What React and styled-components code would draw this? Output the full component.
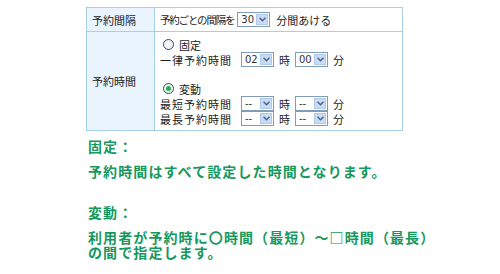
import styled, { createGlobalStyle } from "styled-components";

const Global = createGlobalStyle`
  body {
    margin: 0;
    background: #fff;
    font-family: "Noto Sans CJK JP", "Noto Sans", sans-serif;
  }
`;

const Page = styled.div`
  width: 500px;
  height: 274px;
  padding: 7px 0 0 86px;
  box-sizing: border-box;
`;

const Table = styled.table`
  width: 317px;
  border-collapse: collapse;
  font-size: 11px;
  color: #222;
  line-height: 14px;
`;

const Label = styled.td`
  width: 62px;
  background: #eaf4fe;
  border: 1px solid #a8cfe8;
  padding: 0 0 0 5px;
  vertical-align: middle;
`;

const Cell = styled.td`
  border: 1px solid #a8cfe8;
  padding: ${(p) => p.$pad || "0 0 0 5px"};
  vertical-align: middle;
`;

const Line = styled.div`
  display: flex;
  align-items: center;
  height: 15px;
  gap: ${(p) => p.$gap || 5}px;
  margin-top: ${(p) => p.$mt || 0}px;
`;

const Tight = styled.span`
  font-size: 10.5px;
  letter-spacing: -1.2px;
  margin-right: 2px;
`;

const Name = styled.span`
  display: inline-flex;
  align-items: center;
  width: ${(p) => (p.$w ? p.$w + "px" : "auto")};
  padding-left: ${(p) => p.$pl || 0}px;
  letter-spacing: ${(p) => p.$ls || 0}px;
`;

const SelectBox = styled.span`
  display: inline-flex;
  align-items: center;
  justify-content: space-between;
  width: ${(p) => p.$w || 33}px;
  height: 15px;
  box-sizing: border-box;
  border: 1px solid #7f9db9;
  background: #fff;
  padding: 1px 1px 1px 3px;
  font-family: "DejaVu Sans", sans-serif;
  font-size: 10px;
  color: #333;
`;

const Arrow = styled.span`
  width: 12px;
  height: 11px;
  background: #c9dcf7;
  border: 1px solid #b2c8e8;
  box-sizing: border-box;
  display: flex;
  align-items: center;
  justify-content: center;
`;

const Radio = styled.span`
  width: 11px;
  height: 11px;
  border-radius: 50%;
  border: 1px solid #1c5180;
  box-sizing: border-box;
  background: #f4f4f0;
  display: inline-flex;
  align-items: center;
  justify-content: center;
  margin-right: 5px;
  &::after {
    content: "";
    width: 5px;
    height: 5px;
    border-radius: 50%;
    background: ${(p) => (p.$on ? "#22b14c" : "transparent")};
  }
`;

const Notes = styled.div`
  margin-top: 8px;
  padding-left: 2px;
  color: #16985d;
  font-weight: bold;
  font-size: 14px;
  line-height: 15px;
  letter-spacing: 1.1px;
`;

const NoteTitle = styled.div`
  margin-top: ${(p) => p.$mt || 0}px;
  margin-bottom: 10px;
`;

function Select({ value, w }) {
  return (
    <SelectBox $w={w}>
      {value}
      <Arrow>
        <svg width="7" height="5" viewBox="0 0 7 5">
          <path d="M0.5 0.8 L3.5 3.8 L6.5 0.8" fill="none" stroke="#4d6185" strokeWidth="1.5" />
        </svg>
      </Arrow>
    </SelectBox>
  );
}

function TimePick({ h, m }) {
  return (
    <>
      <Select value={h} />
      <span>時</span>
      <Select value={m} />
      <span>分</span>
    </>
  );
}

export default function App() {
  return (
    <Page>
      <Global />
      <Table>
        <tbody>
          <tr style={{ height: 24 }}>
            <Label>予約間隔</Label>
            <Cell>
              <Line $gap={1}>
                <Tight>予約ごとの間隔を</Tight>
                <Select value="30" />
                <span>&nbsp;&nbsp;分間あける</span>
              </Line>
            </Cell>
          </tr>
          <tr>
            <Label>予約時間</Label>
            <Cell $pad="5px 0 4px 5px">
              <Line>
                <Name $pl={3}>
                  <Radio />
                  固定
                </Name>
              </Line>
              <Line>
                <Name $w={76} $ls={1}>一律予約時間</Name>
                <TimePick h="02" m="00" />
              </Line>
              <Line $mt={14}>
                <Name $pl={3}>
                  <Radio $on />
                  変動
                </Name>
              </Line>
              <Line>
                <Name $w={76} $ls={1}>最短予約時間</Name>
                <TimePick h="--" m="--" />
              </Line>
              <Line>
                <Name $w={76} $ls={1}>最長予約時間</Name>
                <TimePick h="--" m="--" />
              </Line>
            </Cell>
          </tr>
        </tbody>
      </Table>
      <Notes>
        <NoteTitle>固定：</NoteTitle>
        <div>予約時間はすべて設定した時間となります。</div>
        <NoteTitle $mt={26}>変動：</NoteTitle>
        <div>利用者が予約時に〇時間（最短）～□時間（最長）</div>
        <div>の間で指定します。</div>
      </Notes>
    </Page>
  );
}
